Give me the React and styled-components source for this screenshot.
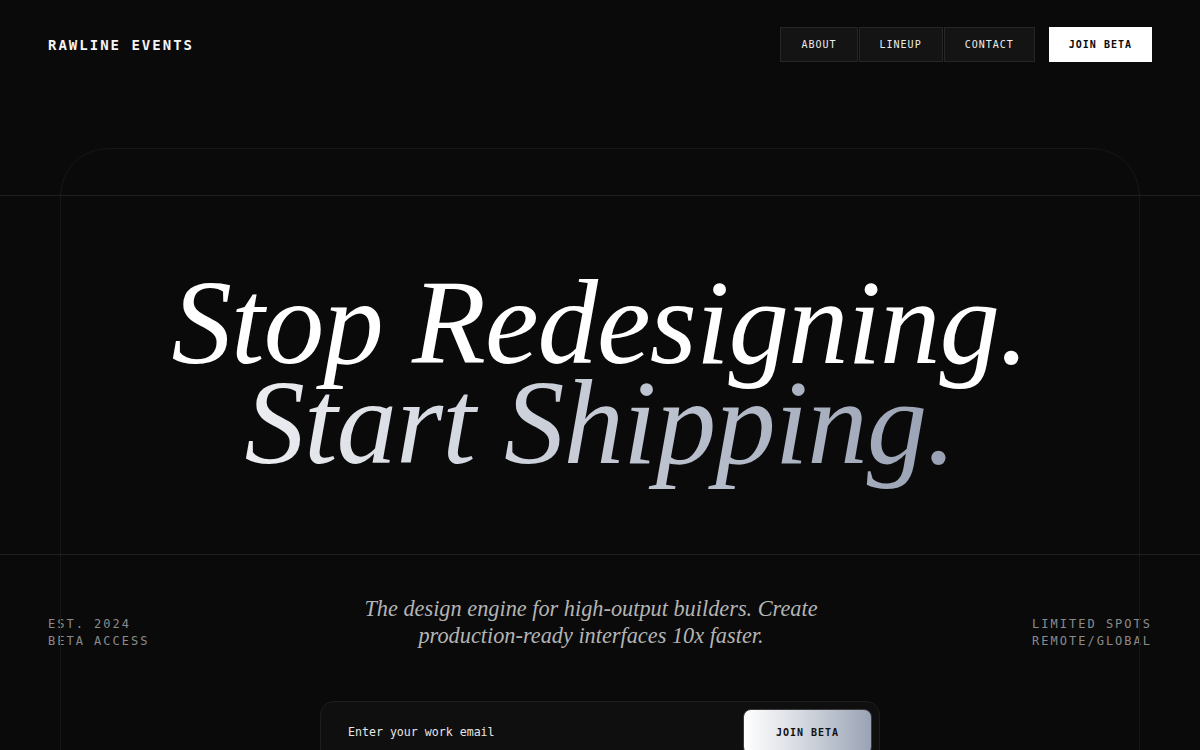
import React from 'react';
import styled, { createGlobalStyle } from 'styled-components';

const GlobalStyle = createGlobalStyle`
  html, body {
    margin: 0;
    padding: 0;
    background: #0a0a0a;
    overflow: hidden;
  }
  * { box-sizing: border-box; }
`;

const mono = `"DejaVu Sans Mono", "Liberation Mono", monospace`;
const serif = `"Liberation Serif", "DejaVu Serif", serif`;

const Page = styled.div`
  width: 1200px;
  height: 750px;
  background: #0a0a0a;
  color: #fff;
  overflow: hidden;
`;

const Nav = styled.header`
  display: flex;
  align-items: center;
  justify-content: space-between;
  padding: 27px 48px 0 48px;
  height: 62px;
`;

const Logo = styled.div`
  font-family: ${mono};
  font-weight: 700;
  font-size: 14px;
  letter-spacing: 2px;
  color: #f5f5f5;
`;

const NavRight = styled.nav`
  display: flex;
  align-items: center;
  gap: 14px;
`;

const LinkGroup = styled.div`
  display: flex;
  gap: 1px;
`;

const NavLink = styled.a`
  display: flex;
  align-items: center;
  height: 35px;
  padding: 0 20px;
  background: #141414;
  border: 1px solid #262626;
  font-family: ${mono};
  font-size: 10px;
  letter-spacing: 1px;
  color: #ececec;
  text-decoration: none;
`;

const NavCta = styled(NavLink)`
  background: #ffffff;
  border-color: #ffffff;
  color: #0a0a0a;
  font-weight: 700;
  padding: 0 19px;
`;

const Hero = styled.section`
  position: relative;
  margin-top: 86px;
  padding-top: 47px;

  &::before {
    content: '';
    position: absolute;
    top: 0;
    left: 60px;
    right: 60px;
    height: 800px;
    border: 1px solid #161616;
    border-radius: 48px;
    pointer-events: none;
  }
`;

const Band = styled.div`
  position: relative;
  height: 360px;
  border-top: 1px solid #1f1f1f;
  border-bottom: 1px solid #1f1f1f;
  display: flex;
  align-items: center;
  justify-content: center;
`;

const Headline = styled.h1`
  margin: 0;
  font-family: ${serif};
  font-style: italic;
  font-weight: 400;
  font-size: 121px;
  line-height: 100px;
  letter-spacing: -1px;
  text-align: center;
  color: #ffffff;
  transform: translateY(-3px);
`;

const Line = styled.span`
  display: block;
`;

const GradientLine = styled(Line)`
  background: linear-gradient(90deg, #f4f5f7 0%, #c9ced8 45%, #8f99ad 100%);
  -webkit-background-clip: text;
  background-clip: text;
  color: transparent;
  padding: 0 20px 20px;
  margin-bottom: -20px;
`;

const MetaRow = styled.div`
  display: grid;
  grid-template-columns: 1fr 490px 1fr;
  align-items: start;
  padding: 40px 48px 0 48px;
`;

const SideLabel = styled.div`
  font-family: ${mono};
  font-size: 12px;
  line-height: 17px;
  letter-spacing: 2px;
  color: #8a8a8a;
  text-align: ${p => (p.$right ? 'right' : 'left')};
  padding-top: 21px;
`;

const Subtitle = styled.p`
  margin: 0;
  font-family: ${serif};
  font-style: italic;
  font-size: 22.3px;
  line-height: 27px;
  color: #b4b4b4;
  text-align: center;
  transform: translateX(-9px);
`;

const FormWrap = styled.div`
  display: flex;
  justify-content: center;
  margin-top: 51px;
`;

const Form = styled.form`
  display: flex;
  align-items: flex-start;
  width: 560px;
  padding: 7px 7px 7px 27px;
  background: #0f0f0f;
  border: 1px solid #1e1e1e;
  border-radius: 14px;
`;

const EmailInput = styled.input`
  flex: 1;
  align-self: center;
  padding: 0;
  background: transparent;
  border: none;
  outline: none;
  font-family: ${mono};
  font-size: 11.6px;
  color: #e6e6e6;

  &::placeholder {
    color: #e6e6e6;
  }
`;

const SubmitButton = styled.button`
  width: 129px;
  height: 46px;
  border: 1px solid #3a3a3a;
  border-radius: 8px;
  background: linear-gradient(90deg, #ffffff 0%, #d5d9e0 45%, #9aa3b5 100%);
  font-family: ${mono};
  font-weight: 700;
  font-size: 10px;
  letter-spacing: 1px;
  color: #111;
`;

export default function App() {
  return (
    <Page>
      <GlobalStyle />
      <Nav>
        <Logo>RAWLINE EVENTS</Logo>
        <NavRight>
          <LinkGroup>
            <NavLink href="#">ABOUT</NavLink>
            <NavLink href="#">LINEUP</NavLink>
            <NavLink href="#">CONTACT</NavLink>
          </LinkGroup>
          <NavCta href="#">JOIN BETA</NavCta>
        </NavRight>
      </Nav>

      <Hero>
        <Band>
          <Headline>
            <Line>Stop Redesigning.</Line>
            <GradientLine>Start Shipping.</GradientLine>
          </Headline>
        </Band>

        <MetaRow>
          <SideLabel>
            EST. 2024<br />BETA ACCESS
          </SideLabel>
          <Subtitle>
            The design engine for high-output builders. Create production-ready interfaces 10x faster.
          </Subtitle>
          <SideLabel $right>
            LIMITED SPOTS<br />REMOTE/GLOBAL
          </SideLabel>
        </MetaRow>

        <FormWrap>
          <Form onSubmit={e => e.preventDefault()}>
            <EmailInput type="email" placeholder="Enter your work email" />
            <SubmitButton type="submit">JOIN BETA</SubmitButton>
          </Form>
        </FormWrap>
      </Hero>
    </Page>
  );
}
